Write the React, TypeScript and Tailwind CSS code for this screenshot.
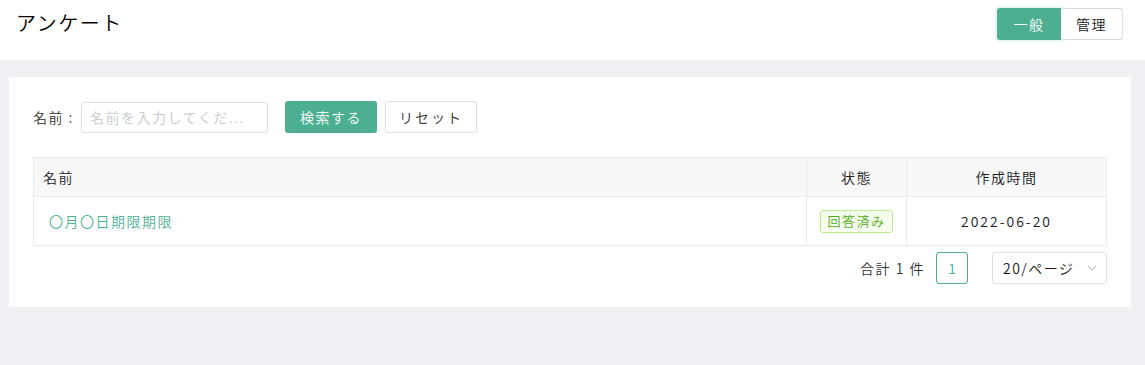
import React from "react";

export default function App() {
  const font = { fontFamily: '"Noto Sans CJK JP", "Noto Sans", sans-serif' };
  return (
    <div className="w-[1145px] h-[365px] bg-[#f0f1f5] flex flex-col font-[350]" style={font}>
      <div className="h-[60px] bg-white flex items-start justify-between pl-[16px] pr-[22px] shrink-0">
        <div className="text-[20px] text-[#000000] leading-none mt-[13px] tracking-[1.5px]">アンケート</div>
        <div className="flex mt-[8px]">
          <button className="w-[64px] h-[32px] bg-[#4caf91] text-white text-[14px] rounded-l-[3px] tracking-[1.5px] shadow-[0_0_0_2px_rgba(76,175,145,0.12)]">一般</button>
          <button className="w-[62px] h-[32px] bg-white text-[#1a1a1a] text-[14px] border border-[#dcdee2] border-l-0 rounded-r-[3px] tracking-[1.5px]">管理</button>
        </div>
      </div>
      <div className="ml-[9px] mr-[14px] mt-[17px] bg-white h-[230px] pt-[24px] px-[24px]">
        <div className="flex items-center tracking-[1.5px]">
          <span className="text-[14px] text-[#333333] w-[48px]">名前 :</span>
          <div className="w-[187px] h-[31px] border border-[#dcdee2] rounded-[3px] flex items-center px-[8px] text-[14px] text-[#c5c8ce] overflow-hidden whitespace-nowrap">名前を入力してくだ...</div>
          <button className="ml-[17px] w-[92px] h-[32px] bg-[#4caf91] text-white text-[14px] rounded-[3px] tracking-[1.5px]">検索する</button>
          <button className="ml-[8px] w-[92px] h-[32px] bg-white border border-[#dcdee2] text-[#333333] text-[14px] rounded-[3px] tracking-[2px]">リセット</button>
        </div>
        <div className="mt-[24px] border border-[#e8eaec] text-[14px] tracking-[1.5px]">
          <div className="flex h-[39px] bg-[#f8f8f9] border-b border-[#e8eaec] text-[#1a1a1a]">
            <div className="flex-1 flex items-center pl-[9px] border-r border-[#e8eaec]">名前</div>
            <div className="w-[100px] flex items-center justify-center border-r border-[#e8eaec]">状態</div>
            <div className="w-[199px] flex items-center justify-center">作成時間</div>
          </div>
          <div className="flex h-[48px] text-[#333333]">
            <div className="flex-1 flex items-center pl-[15px] border-r border-[#e8eaec] text-[#4caf91]">〇月〇日期限期限</div>
            <div className="w-[100px] flex items-center justify-center border-r border-[#e8eaec]">
              <span className="h-[23px] px-[6px] flex items-center bg-[#f6ffed] border border-[#b7eb8f] text-[#52a81a] rounded-[3px] text-[13px] tracking-[1.5px]">回答済み</span>
            </div>
            <div className="w-[199px] flex items-center justify-center text-[#1a1a1a] tracking-[2px]">2022-06-20</div>
          </div>
        </div>
        <div className="flex justify-end items-center mt-[6px] text-[14px] text-[#333333]">
          <span className="tracking-[1.5px]">合計&nbsp;1&nbsp;件</span>
          <div className="ml-[11px] w-[32px] h-[32px] border border-[#4caf91] rounded-[3px] flex items-center justify-center text-[#4caf91]">1</div>
          <div className="ml-[24px] w-[115px] h-[32px] border border-[#dcdee2] rounded-[3px] flex items-center pl-[10px] pr-[8px] justify-between text-[#1a1a1a]">
            <span className="tracking-[1.5px]">20/ページ</span>
            <svg width="12" height="12" viewBox="0 0 12 12" fill="none" stroke="#c5c8ce" strokeWidth="1.2"><path d="M2 4 L6 8 L10 4" /></svg>
          </div>
        </div>
      </div>
    </div>
  );
}
